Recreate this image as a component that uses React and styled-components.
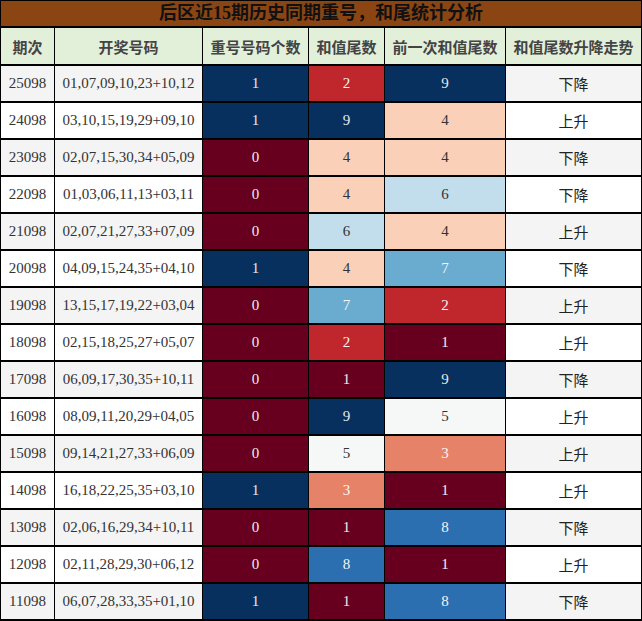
import React from "react";
import styled, { createGlobalStyle } from "styled-components";

const GlobalStyle = createGlobalStyle`
  body {
    margin: 0;
    background: #ffffff;
  }
`;

const rows = [
  ["25098", "01,07,09,10,23+10,12", 1, 2, 9, "下降"],
  ["24098", "03,10,15,19,29+09,10", 1, 9, 4, "上升"],
  ["23098", "02,07,15,30,34+05,09", 0, 4, 4, "下降"],
  ["22098", "01,03,06,11,13+03,11", 0, 4, 6, "下降"],
  ["21098", "02,07,21,27,33+07,09", 0, 6, 4, "上升"],
  ["20098", "04,09,15,24,35+04,10", 1, 4, 7, "下降"],
  ["19098", "13,15,17,19,22+03,04", 0, 7, 2, "上升"],
  ["18098", "02,15,18,25,27+05,07", 0, 2, 1, "上升"],
  ["17098", "06,09,17,30,35+10,11", 0, 1, 9, "下降"],
  ["16098", "08,09,11,20,29+04,05", 0, 9, 5, "上升"],
  ["15098", "09,14,21,27,33+06,09", 0, 5, 3, "上升"],
  ["14098", "16,18,22,25,35+03,10", 1, 3, 1, "上升"],
  ["13098", "02,06,16,29,34+10,11", 0, 1, 8, "下降"],
  ["12098", "02,11,28,29,30+06,12", 0, 8, 1, "上升"],
  ["11098", "06,07,28,33,35+01,10", 1, 1, 8, "下降"],
];

// RdBu-like scale for tail digits
const tailColors = {
  0: ["#67001f", "#eeeeee"],
  1: ["#67001f", "#eeeeee"],
  2: ["#c0272d", "#f4f4f4"],
  3: ["#e58268", "#f6f6f6"],
  4: ["#fbd0b9", "#333333"],
  5: ["#f6f7f7", "#333333"],
  6: ["#c2ddec", "#333333"],
  7: ["#6aacd0", "#f4f4f4"],
  8: ["#2b6fb0", "#f4f4f4"],
  9: ["#07305f", "#e8e8e8"],
};

const repeatColors = {
  0: ["#67001f", "#eeeeee"],
  1: ["#07305f", "#e8e8e8"],
};

const headers = ["期次", "开奖号码", "重号号码个数", "和值尾数", "前一次和值尾数", "和值尾数升降走势"];

const COLS = "54px 148px 106px 76px 121px 136px";

function App() {
  return (
    <>
      <GlobalStyle />
      <Table>
        <Title>后区近15期历史同期重号，和尾统计分析</Title>
        <HeadRow>
          {headers.map((h) => (
            <HeadCell key={h}>{h}</HeadCell>
          ))}
        </HeadRow>
        {rows.map((r, i) => {
          const stripe = i % 2 === 0 ? "#f4f4f4" : "#ffffff";
          return (
            <Row key={r[0]}>
              <Cell bg={stripe}>{r[0]}</Cell>
              <Cell bg={stripe}>{r[1]}</Cell>
              <Cell bg={repeatColors[r[2]][0]} fg={repeatColors[r[2]][1]}>
                {r[2]}
              </Cell>
              <Cell bg={tailColors[r[3]][0]} fg={tailColors[r[3]][1]}>
                {r[3]}
              </Cell>
              <Cell bg={tailColors[r[4]][0]} fg={tailColors[r[4]][1]}>
                {r[4]}
              </Cell>
              <TrendCell bg={stripe}>{r[5]}</TrendCell>
            </Row>
          );
        })}
      </Table>
    </>
  );
}

export default App;

const Table = styled.div`
  width: 642px;
  box-sizing: border-box;
  border-left: 1px solid #000;
  border-top: 1px solid #000;
`;

const Title = styled.div`
  height: 25px;
  border-bottom: 2px solid #000;
  border-right: 1px solid #000;
  background-color: #8b4513;
  color: #111111;
  font-family: "Liberation Serif", "Noto Sans CJK SC", serif;
  font-weight: 700;
  font-size: 18px;
  line-height: 25px;
  text-align: center;
`;

const HeadRow = styled.div`
  display: grid;
  grid-template-columns: ${COLS};
  height: 38px;
`;

const HeadCell = styled.div`
  display: flex;
  align-items: center;
  justify-content: center;
  box-sizing: border-box;
  border-right: 1px solid #000;
  border-bottom: 2px solid #000;
  background: #e2efd9;
  color: #444444;
  font-family: "Noto Sans CJK SC", sans-serif;
  font-weight: 700;
  font-size: 15px;
`;

const Row = styled.div`
  display: grid;
  grid-template-columns: ${COLS};
  height: 37px;
`;

const Cell = styled.div`
  display: flex;
  align-items: center;
  justify-content: center;
  box-sizing: border-box;
  border-right: 1px solid #000;
  border-bottom: 2px solid #000;
  background: ${(p) => p.bg};
  color: ${(p) => p.fg || "#333333"};
  font-family: "Liberation Serif", serif;
  font-size: 15px;
`;

const TrendCell = styled(Cell)`
  color: #222222;
  font-family: "Noto Sans CJK SC", sans-serif;
`;
